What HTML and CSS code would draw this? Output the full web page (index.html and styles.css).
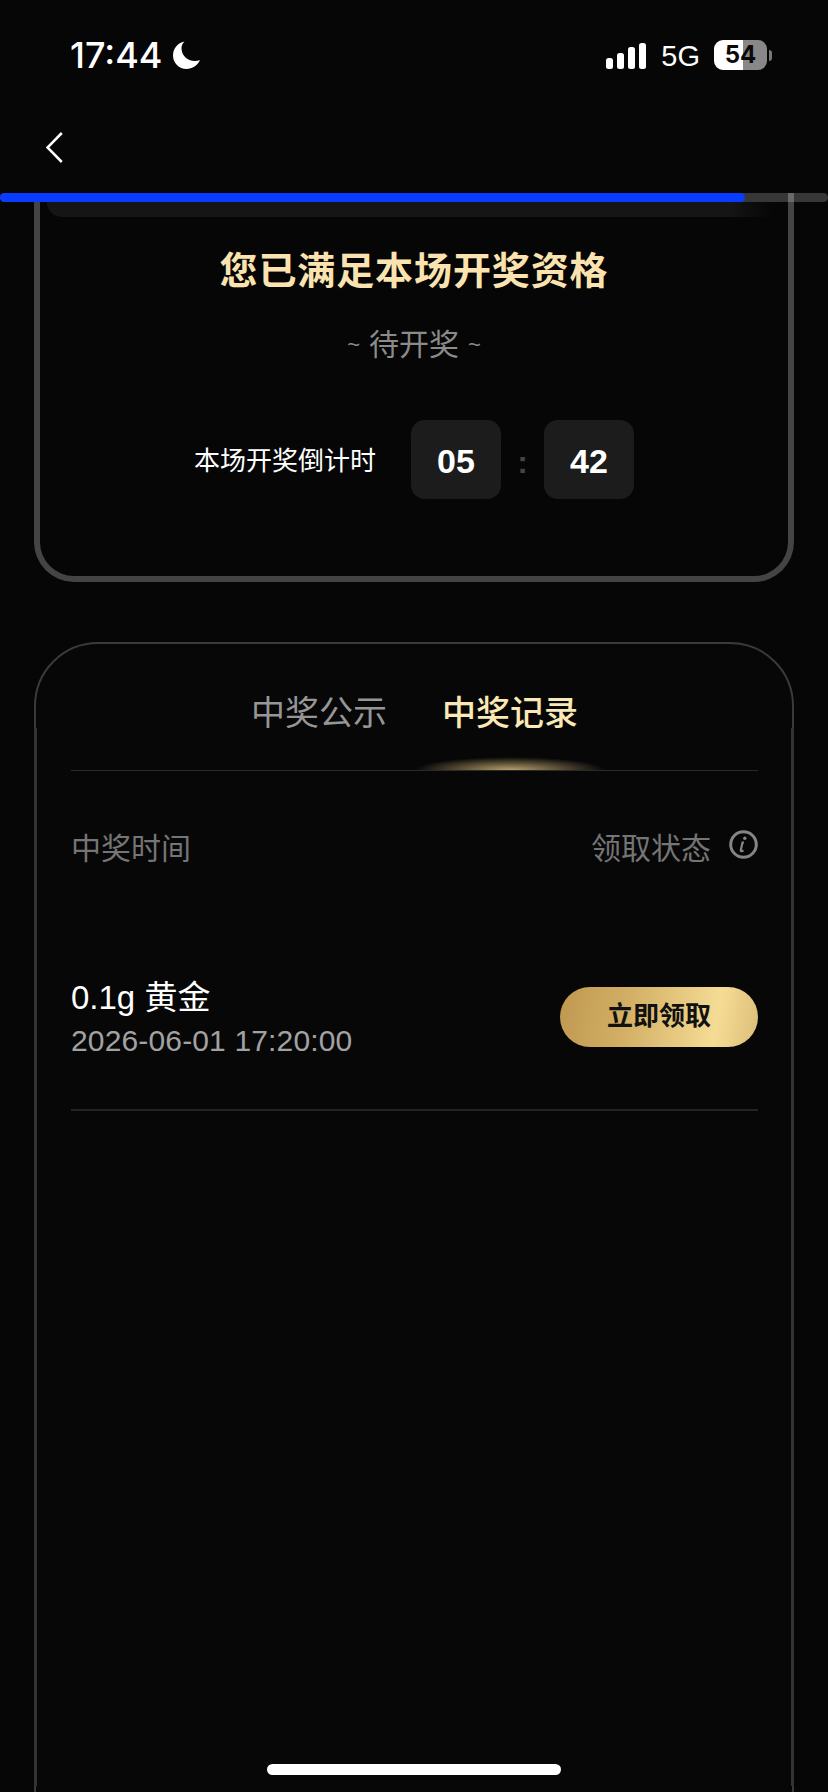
FILE: index.html
```html
<!DOCTYPE html>
<html lang="zh-CN">
<head>
<meta charset="utf-8">
<title>中奖记录</title>
<link rel="stylesheet" href="styles.css">
</head>
<body>
<div class="phone">
  <header class="status">
    <div class="status-left">
      <span class="time">17:44</span>
      <svg class="moon" viewBox="0 0 27 28" aria-hidden="true"><path d="M11.5 0.5C4.5 2 0 7.5 0 14.5 0 22 6 28 13.5 28c6 0 11-3.5 13.5-9-1.500.6-3.200.9-5 .9C14 19.900 8.500 14.400 8.500 7c0-2.500 1-4.700 3-6.500z"/></svg>
    </div>
    <div class="status-right">
      <div class="signal"><i class="b1"></i><i class="b2"></i><i class="b3"></i><i class="b4"></i></div>
      <span class="net">5G</span>
      <div class="battery"><span class="level">54</span></div>
      <i class="nub"></i>
    </div>
  </header>
  <nav class="nav">
    <svg class="back" viewBox="0 0 17 31" aria-hidden="true"><path d="M15.800 1 1.500 15.500 15.800 30"/></svg>
  </nav>
  <div class="progress"><div class="progress-fill"></div></div>

  <section class="draw-card">
    <div class="strip"></div>
    <h1 class="title">您已满足本场开奖资格</h1>
    <p class="sub"><span class="tilde">~</span><span>待开奖</span><span class="tilde">~</span></p>
    <div class="countdown">
      <span class="cd-label">本场开奖倒计时</span>
      <span class="cd-box">05</span>
      <span class="cd-sep">:</span>
      <span class="cd-box">42</span>
    </div>
  </section>

  <section class="record-card">
    <div class="tabs">
      <span class="tab">中奖公示</span>
      <span class="tab active">中奖记录</span>
    </div>
    <div class="head">
      <span>中奖时间</span>
      <div class="head-right">
        <span>领取状态</span>
        <svg class="info" viewBox="0 0 29 29" aria-hidden="true"><circle cx="14.500" cy="14.500" r="12.800"/><path class="info-stem" d="M15 12.500h-1.500L11.800 20c-.3 1.300.8 1.700 2.700.4"/><circle class="info-dot" cx="15.800" cy="8.300" r="1.700"/></svg>
      </div>
    </div>
    <div class="row">
      <div class="row-text">
        <div class="prize">0.1g 黄金</div>
        <div class="date">2026-06-01 17:20:00</div>
      </div>
      <button class="claim" type="button">立即领取</button>
    </div>
  </section>

  <div class="home"></div>
</div>
</body>
</html>
```
FILE: styles.css
```css
* { box-sizing: border-box; }
html, body { margin: 0; padding: 0; background: #060607; }
body {
  font-family: "Liberation Sans", "Noto Sans CJK SC", sans-serif;
  color: #fff;
}
.phone {
  position: relative;
  width: 828px;
  height: 1792px;
  overflow: hidden;
  background: #060607;
}

/* status bar */
.status {
  height: 110px;
  padding: 40px 56px 0 70px;
  display: flex;
  justify-content: space-between;
  align-items: flex-start;
}
.status-left { display: flex; align-items: center; height: 30px; gap: 11px; }
.time { font-family: Inter, "Liberation Sans", sans-serif; font-size: 36px; font-weight: 500; line-height: 30px; }
.moon { width: 27px; height: 28px; fill: #fff; }
.status-right { display: flex; align-items: center; height: 30px; }
.signal { display: flex; align-items: flex-end; gap: 4px; height: 26px; margin-top: 2px; }
.signal i { display: block; width: 7px; background: #fff; border-radius: 2.5px; }
.b1 { height: 11px; }
.b2 { height: 16px; }
.b3 { height: 22px; }
.b4 { height: 26px; }
.net { font-size: 29px; line-height: 30px; margin-left: 15px; margin-top: 1px; }
.battery {
  width: 53px;
  height: 30px;
  margin-left: 14px;
  border-radius: 9px;
  background: linear-gradient(90deg, #fff 0 55%, #888 55% 100%);
  display: flex;
  align-items: center;
  justify-content: center;
}
.level { font-family: Inter, "Liberation Sans", sans-serif; font-size: 24px; font-weight: 700; color: #0a0a0a; line-height: 30px; }
.nub { width: 3px; height: 11px; margin-left: 2px; background: #777; border-radius: 0 3px 3px 0; }

/* nav */
.nav { height: 83px; padding: 22px 0 0 46px; }
.back { display: block; width: 17px; height: 31px; fill: none; stroke: #fff; stroke-width: 2.500; }

/* progress */
.progress {
  position: relative;
  z-index: 1;
  height: 9px;
  margin-bottom: -9px;
  border-radius: 5px;
  background: rgba(255, 255, 255, 0.2);
}
.progress-fill { width: 745px; height: 100%; border-radius: 5px; background: #0a3cff; }

/* upper card */
.draw-card {
  margin: 0 34px 60px;
  padding: 9px 0 77px;
  border: 6px solid #444;
  border-top: 0;
  border-radius: 0 0 40px 40px;
}
.strip {
  height: 15px;
  margin: 0 16px 0 7px;
  background: linear-gradient(90deg, #151516 0 94%, rgba(21, 21, 22, 0) 100%);
  border-radius: 0 0 0 20px;
}
.title {
  margin: 27px 0 0;
  font-size: 38px;
  font-weight: 700;
  line-height: 54px;
  text-align: center;
  color: #fbe3b0;
  letter-spacing: 0.9px;
}
.sub {
  margin: 27px 0 0;
  height: 40px;
  display: flex;
  justify-content: center;
  align-items: center;
  gap: 9px;
  font-size: 30px;
  line-height: 40px;
  color: #8b8b8b;
}
.tilde { font-size: 22px; }
.countdown {
  margin-top: 55px;
  display: flex;
  align-items: center;
  justify-content: center;
}
.cd-label { font-size: 26px; line-height: 36px; margin-right: 35px; padding-top: 2px; }
.cd-box {
  width: 90px;
  height: 79px;
  border-radius: 14px;
  background: #1c1c1d;
  font-size: 34px;
  font-weight: 700;
  display: flex;
  align-items: center;
  justify-content: center;
  padding-top: 3px;
}
.cd-sep { width: 43px; text-align: center; font-size: 32px; font-weight: 700; color: #444; line-height: 40px; padding-top: 4px; }

/* lower card */
.record-card {
  position: relative;
  height: 1210px;
  margin: 0 34px;
  padding: 0 34px 0 35px;
  border: 2px solid #3a3a3a;
  border-radius: 64px;
  background: #070708;
}
.record-card::before,
.record-card::after {
  content: "";
  position: absolute;
  top: 84px;
  bottom: 64px;
  width: 3px;
  background: #333;
}
.record-card::before { left: -2px; }
.record-card::after { right: -2px; }
.tabs {
  height: 127px;
  padding-top: 45px;
  display: flex;
  justify-content: center;
  gap: 55px;
  border-bottom: 1px solid #2a2a2a;
}
.tab { position: relative; font-size: 34px; line-height: 48px; color: #969696; height: 81px; }
.tab.active { color: #fbe9b5; font-weight: 500; }
.tab.active::after {
  content: "";
  position: absolute;
  left: 50%;
  bottom: 0;
  width: 190px;
  height: 13px;
  margin-left: -95px;
  background: radial-gradient(ellipse 50% 100% at 50% 100%, rgba(226, 198, 130, 0.8), rgba(226, 198, 130, 0) 100%);
}
.head {
  margin-top: 58px;
  display: flex;
  justify-content: space-between;
  align-items: flex-start;
  font-size: 30px;
  line-height: 40px;
  color: #757575;
}
.head-right { display: flex; align-items: flex-start; gap: 18px; }
.info { width: 29px; height: 29px; margin-top: 1px; fill: none; stroke: #858585; stroke-width: 3; }
.info-stem { stroke-width: 2.200; }
.info-dot { fill: #858585; stroke: none; }
.row {
  margin-top: 107px;
  padding-bottom: 50px;
  border-bottom: 2px solid #232323;
  display: flex;
  justify-content: space-between;
  align-items: center;
}
.prize { font-size: 33px; line-height: 44px; }
.date { margin-top: 3px; font-size: 30px; line-height: 36px; color: #a2a2a2; letter-spacing: 0.15px; }
.claim {
  width: 198px;
  height: 60px;
  margin-bottom: 1px;
  padding: 0 0 7px;
  border: 0;
  border-radius: 30px;
  background: linear-gradient(100deg, #bf9850 0%, #d3b066 35%, #f5dc94 78%, #dcbd78 100%);
  font-family: inherit;
  font-size: 26px;
  font-weight: 700;
  color: #111;
}

.home {
  position: absolute;
  left: 267px;
  bottom: 17px;
  width: 294px;
  height: 11px;
  border-radius: 6px;
  background: #fff;
}
```
